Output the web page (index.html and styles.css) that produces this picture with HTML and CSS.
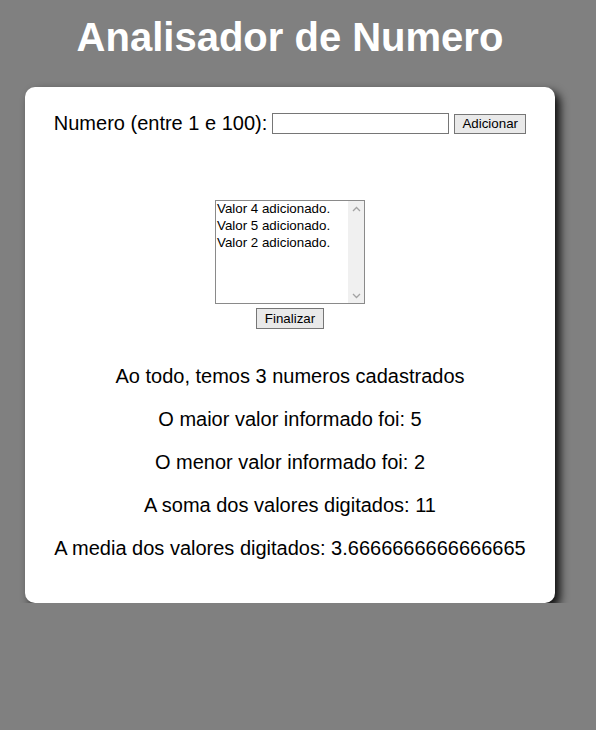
FILE: index.html
```html
<!DOCTYPE html>
<html lang="pt">
<head>
<meta charset="utf-8">
<title>Analisador de Numero</title>
<link rel="stylesheet" href="styles.css">
</head>
<body>
<main class="page">
  <h1 class="title">Analisador de Numero</h1>
  <section class="card">
    <div class="entry">
      <label class="entry-label" for="num">Numero (entre 1 e 100):</label>
      <input class="field" id="num" type="text">
      <button class="btn btn-add" type="button">Adicionar</button>
    </div>
    <div class="listbox">
      <div class="options">
        <div class="option">Valor 4 adicionado.</div>
        <div class="option">Valor 5 adicionado.</div>
        <div class="option">Valor 2 adicionado.</div>
      </div>
      <div class="scrollbar">
        <svg class="arrow" width="9" height="6" viewBox="0 0 9 6"><path d="M1 5 L4.5 1.5 L8 5" fill="none" stroke="#a3a3a3" stroke-width="1.3"/></svg>
        <svg class="arrow" width="9" height="6" viewBox="0 0 9 6"><path d="M1 1 L4.5 4.5 L8 1" fill="none" stroke="#a3a3a3" stroke-width="1.3"/></svg>
      </div>
    </div>
    <button class="btn btn-finish" type="button">Finalizar</button>
    <div class="results">
      <p class="result">Ao todo, temos 3 numeros cadastrados</p>
      <p class="result">O maior valor informado foi: 5</p>
      <p class="result">O menor valor informado foi: 2</p>
      <p class="result">A soma dos valores digitados: 11</p>
      <p class="result">A media dos valores digitados: 3.6666666666666665</p>
    </div>
  </section>
</main>
</body>
</html>
```
FILE: styles.css
```css
html, body {
  margin: 0;
  padding: 0;
}
body {
  background: #808080;
  font-family: "Liberation Sans", Arial, sans-serif;
  color: #000;
}
.page {
  width: 530px;
  margin-left: 25px;
  display: flex;
  flex-direction: column;
}
.title {
  margin: 14px 0 0;
  font-size: 40px;
  line-height: 46px;
  font-weight: bold;
  color: #fff;
  text-align: center;
}
.card {
  margin-top: 27px;
  height: 516px;
  box-sizing: border-box;
  background: #fff;
  border-radius: 10px;
  box-shadow: 5px 5px 10px rgba(0, 0, 0, 0.9);
  display: flex;
  flex-direction: column;
  align-items: center;
  padding-top: 25px;
}
.entry {
  display: flex;
  align-items: center;
  height: 23px;
  font-size: 20px;
  line-height: 23px;
}
.entry-label {
  margin-right: 5px;
}
.field {
  width: 177px;
  height: 21px;
  box-sizing: border-box;
  border: 1px solid #767676;
  border-radius: 0;
  padding: 1px 2px;
  margin: 0 5px 0 0;
  font: 13.333px "Liberation Sans", Arial, sans-serif;
  background: #fff;
}
.btn {
  box-sizing: border-box;
  height: 20px;
  padding: 0 6px;
  margin: 0;
  border: 1px solid #767676;
  border-radius: 0;
  background: #e9e9e9;
  color: #000;
  font: 13.333px "Liberation Sans", Arial, sans-serif;
  line-height: 18px;
}
.btn-add {
  width: 72px;
  margin-top: 1px;
}
.listbox {
  margin-top: 65px;
  width: 150px;
  height: 104px;
  box-sizing: border-box;
  border: 1px solid #8a8a8a;
  display: flex;
  background: #fff;
}
.options {
  flex: 1;
  margin-top: -1px;
  padding: 0 0 0 1px;
  font-size: 13.333px;
  line-height: 17px;
}
.option {
  white-space: nowrap;
}
.scrollbar {
  width: 16px;
  background: #f0f0f0;
  display: flex;
  flex-direction: column;
  justify-content: space-between;
  align-items: center;
  padding: 5px 0 4px;
}
.arrow {
  display: block;
}
.btn-finish {
  margin-top: 4px;
  width: 68px;
  height: 21px;
}
.results {
  margin-top: 36px;
  display: flex;
  flex-direction: column;
  align-items: center;
  gap: 20px;
}
.result {
  margin: 0;
  font-size: 20px;
  line-height: 23px;
}
```
